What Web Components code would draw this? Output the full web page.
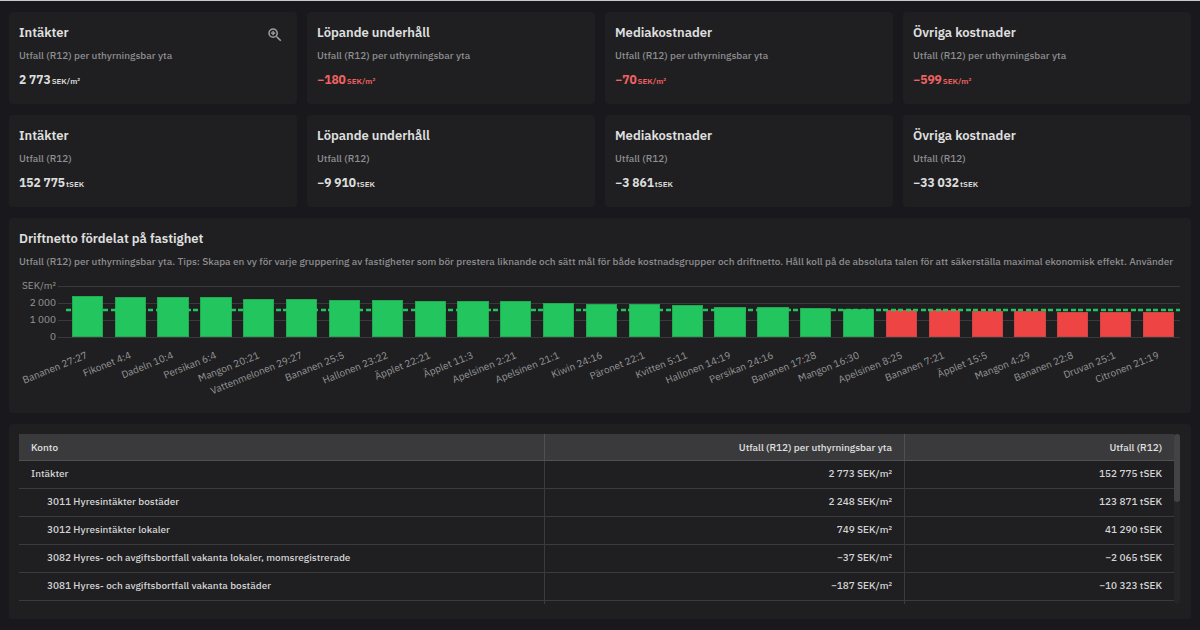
<!DOCTYPE html>
<html lang="sv">
<head>
<meta charset="utf-8">
<meta name="viewport" content="width=device-width, initial-scale=1">
<title>Driftnetto</title>
<style>
html { background: #19191d; }
body { margin: 0; font-family: "IBM Plex Sans", Roboto, "Noto Sans", sans-serif; font-size: 10px; font-weight: 500; color: #dcdcdc; }
</style>
</head>
<body>
<finance-dashboard></finance-dashboard>

<script>
const define = (name, markup, setup) => {
  const template = document.createElement('template');
  template.innerHTML = markup;
  customElements.define(name, class extends HTMLElement {
    constructor() {
      super();
      this.attachShadow({ mode: 'open' }).append(template.content.cloneNode(true));
    }
    connectedCallback() { if (setup) setup(this, this.shadowRoot); }
  });
};

/* Panel with an optional heading and description */
define('dash-panel', `
<style>
:host { display: block; box-sizing: border-box; min-width: 0; background: #1f1f21; border-radius: 4px; padding: 10px 11px 10px 10px; }
h2 { margin: 0; font-size: 13px; line-height: 22px; font-weight: 600; color: #e0e0e0; }
p { margin: 0; padding-top: 4px; line-height: 16px; color: #8e8e90; white-space: nowrap; overflow: hidden; }
</style>
<h2></h2><p></p><slot></slot>`, (host, root) => {
  const heading = host.getAttribute('heading');
  if (heading) {
    root.querySelector('h2').textContent = heading;
    root.querySelector('p').textContent = host.getAttribute('description');
  } else {
    root.querySelector('h2').remove();
    root.querySelector('p').remove();
  }
});

/* Key figure card */
define('kpi-card', `
<style>
:host { display: block; box-sizing: border-box; position: relative; min-width: 0; min-height: 92px; padding: 10px; background: #1f1f21; border-radius: 4px; }
h2 { margin: 0; font-size: 13px; line-height: 22px; font-weight: 600; color: #e0e0e0; }
p { margin: 0; padding-top: 4px; line-height: 16px; color: #8e8e90; }
.value { padding-top: 6px; font-size: 12px; line-height: 20px; font-weight: 700; }
.unit { margin-left: 1px; font-size: 8px; font-weight: 600; }
:host([negative]) .value { color: #f06262; }
button { display: none; position: absolute; top: 14px; right: 13px; padding: 0; border: 0; background: none; color: #9c9c9e; line-height: 0; }
:host([zoomable]) button { display: block; }
</style>
<h2></h2><p></p>
<div class="value"><span class="number"></span><span class="unit"></span></div>
<button type="button" aria-label="Zooma in"><svg width="18" height="18" viewBox="0 0 24 24" fill="currentColor" aria-hidden="true"><path d="M15.5 14h-.79l-.28-.27A6.471 6.471 0 0 0 16 9.5 6.5 6.5 0 1 0 9.5 16c1.61 0 3.09-.59 4.23-1.57l.27.28v.79l5 4.99L20.49 19l-4.99-5zm-6 0C7.01 14 5 11.99 5 9.5S7.01 5 9.5 5 14 7.01 14 9.5 11.99 14 9.5 14z"/><path d="M12 10h-2v2H9v-2H7V9h2V7h1v2h2v1z" stroke="currentColor"/></svg></button>`,
(host, root) => {
  root.querySelector('h2').textContent = host.getAttribute('heading');
  root.querySelector('p').textContent = host.getAttribute('caption');
  root.querySelector('.number').textContent = host.getAttribute('value');
  root.querySelector('.unit').textContent = host.getAttribute('unit');
});

/* Bar chart: values per property against a target line */
const bars = [
  ['Bananen 27:27', 2400], ['Fikonet 4:4', 2380], ['Dadeln 10:4', 2350], ['Persikan 6:4', 2330],
  ['Mangon 20:21', 2240], ['Vattenmelonen 29:27', 2230], ['Bananen 25:5', 2180], ['Hallonen 23:22', 2160],
  ['Äpplet 22:21', 2140], ['Äpplet 11:3', 2130], ['Apelsinen 2:21', 2090], ['Apelsinen 21:1', 2030],
  ['Kiwin 24:16', 1970], ['Päronet 22:1', 1930], ['Kvitten 5:11', 1880], ['Hallonen 14:19', 1770],
  ['Persikan 24:16', 1750], ['Bananen 17:28', 1710], ['Mangon 16:30', 1650], ['Apelsinen 8:25', 1590],
  ['Bananen 7:21', 1580], ['Äpplet 15:5', 1530], ['Mangon 4:29', 1520], ['Bananen 22:8', 1500],
  ['Druvan 25:1', 1470], ['Citronen 21:19', 1450]
];
const MAX = 3000, TARGET = 1600;
define('bar-chart', `
<style>
:host { display: grid; grid-template-columns: 39px 1fr; column-gap: 8px; padding-top: 16px; font-weight: 400; color: #969698; }
.axis { display: flex; flex-direction: column; justify-content: space-between; height: 68px; margin: -9px 2px 0 0; text-align: right; line-height: 17px; white-space: nowrap; }
.plot { position: relative; height: 52px; }
.grid { position: absolute; inset: 0 0 0 -8px; display: flex; flex-direction: column; justify-content: space-between; }
.grid i { height: 1px; background: #39393b; }
.bars { position: relative; display: flex; height: 51px; }
.column { position: relative; display: flex; flex: 1; align-items: flex-end; justify-content: center; min-width: 0; }
.bar { width: 73%; background: #22c55e; box-shadow: inset 0 0 0 1px #24a953; }
.bar.low { background: #ef4444; box-shadow: inset 0 0 0 1px #cf4444; }
.label { position: absolute; right: 50%; top: 100%; margin-top: 11px; font-size: 10px; line-height: 14px; white-space: nowrap; transform-origin: right center; transform: rotate(-22deg); }
.target { position: absolute; left: 0; width: 100%; height: 3px; transform: translateY(50%); }
</style>
<div class="axis"><span>SEK/m²</span><span>2 000</span><span>1 000</span><span>0</span></div>
<div class="plot">
  <div class="grid"><i></i><i></i><i></i><i></i></div>
  <div class="bars"></div>
  <svg class="target" aria-hidden="true"><line x1="0" y1="1.5" x2="100%" y2="1.5" stroke="#22c55e" stroke-width="3" stroke-dasharray="5 2 5 3"/></svg>
</div>`, (host, root) => {
  root.querySelector('.bars').innerHTML = bars.map(([name, value]) =>
    `<div class="column"><div class="bar${value < TARGET ? ' low' : ''}" style="height:${value / MAX * 100}%"></div><span class="label">${name}</span></div>`).join('');
  root.querySelector('.target').style.bottom = TARGET / MAX * 100 + '%';
});

/* Account table */
const rows = [
  ['Intäkter', '2 773 SEK/m²', '152 775 tSEK', 0],
  ['3011 Hyresintäkter bostäder', '2 248 SEK/m²', '123 871 tSEK', 1],
  ['3012 Hyresintäkter lokaler', '749 SEK/m²', '41 290 tSEK', 1],
  ['3082 Hyres- och avgiftsbortfall vakanta lokaler, momsregistrerade', '−37 SEK/m²', '−2 065 tSEK', 1],
  ['3081 Hyres- och avgiftsbortfall vakanta bostäder', '−187 SEK/m²', '−10 323 tSEK', 1]
];
define('account-table', `
<style>
:host { display: flex; color: #d4d4d5; }
.view { flex: 1; min-width: 0; overflow: hidden; }
table { width: 100%; table-layout: fixed; border-collapse: separate; border-spacing: 0; }
.amount { width: 360px; } .total { width: 269px; }
th, td { box-sizing: border-box; height: 28px; padding: 0 12px; border-bottom: 1px solid #3b3b3d; border-right: 1px solid #3b3b3d; text-align: right; font-weight: 500; white-space: nowrap; }
td { padding-bottom: 2px; }
th { height: 27px; background: #3a3a3c; border-color: #505052; color: #e0e0e0; }
th:first-child, td:first-child { text-align: left; }
th:last-child, td:last-child { border-right: 0; }
.child td:first-child { padding-left: 28px; }
.rest td { height: 3px; padding: 0; border-bottom: 0; }
.track { width: 6px; background: #252527; border-radius: 3px; }
.thumb { height: 40%; background: #434345; border-radius: 3px; }
</style>
<div class="view"><table>
<colgroup><col><col class="amount"><col class="total"></colgroup>
<thead><tr><th scope="col">Konto</th><th scope="col">Utfall (R12) per uthyrningsbar yta</th><th scope="col">Utfall (R12)</th></tr></thead>
<tbody></tbody></table></div>
<div class="track"><div class="thumb"></div></div>`, (host, root) => {
  root.querySelector('tbody').innerHTML = rows.map(([name, perArea, total, level]) =>
    `<tr${level ? ' class="child"' : ''}><td>${name}</td><td>${perArea}</td><td>${total}</td></tr>`).join('')
    + '<tr class="rest" aria-hidden="true"><td></td><td></td><td></td></tr>';
});

define('finance-dashboard', `
<style>
:host { display: block; border-top: 1px solid #c8cac8; }
main { display: grid; gap: 11px; padding: 11px 9px; }
.cards { display: grid; grid-template-columns: repeat(4, minmax(0, 1fr)); gap: 11px 10px; }
.chart { min-height: 195px; }
.accounts { min-height: 195px; }
</style>
<main>
  <section class="cards">
    <kpi-card heading="Intäkter" caption="Utfall (R12) per uthyrningsbar yta" value="2 773" unit="SEK/m²" zoomable></kpi-card>
    <kpi-card heading="Löpande underhåll" caption="Utfall (R12) per uthyrningsbar yta" value="−180" unit="SEK/m²" negative></kpi-card>
    <kpi-card heading="Mediakostnader" caption="Utfall (R12) per uthyrningsbar yta" value="−70" unit="SEK/m²" negative></kpi-card>
    <kpi-card heading="Övriga kostnader" caption="Utfall (R12) per uthyrningsbar yta" value="−599" unit="SEK/m²" negative></kpi-card>
    <kpi-card heading="Intäkter" caption="Utfall (R12)" value="152 775" unit="tSEK"></kpi-card>
    <kpi-card heading="Löpande underhåll" caption="Utfall (R12)" value="−9 910" unit="tSEK"></kpi-card>
    <kpi-card heading="Mediakostnader" caption="Utfall (R12)" value="−3 861" unit="tSEK"></kpi-card>
    <kpi-card heading="Övriga kostnader" caption="Utfall (R12)" value="−33 032" unit="tSEK"></kpi-card>
  </section>
  <dash-panel class="chart" heading="Driftnetto fördelat på fastighet" description="Utfall (R12) per uthyrningsbar yta. Tips: Skapa en vy för varje gruppering av fastigheter som bör prestera liknande och sätt mål för både kostnadsgrupper och driftnetto. Håll koll på de absoluta talen för att säkerställa maximal ekonomisk effekt. Använder">
    <bar-chart></bar-chart>
  </dash-panel>
  <dash-panel class="accounts"><account-table></account-table></dash-panel>
</main>`);
</script>
</body>
</html>
